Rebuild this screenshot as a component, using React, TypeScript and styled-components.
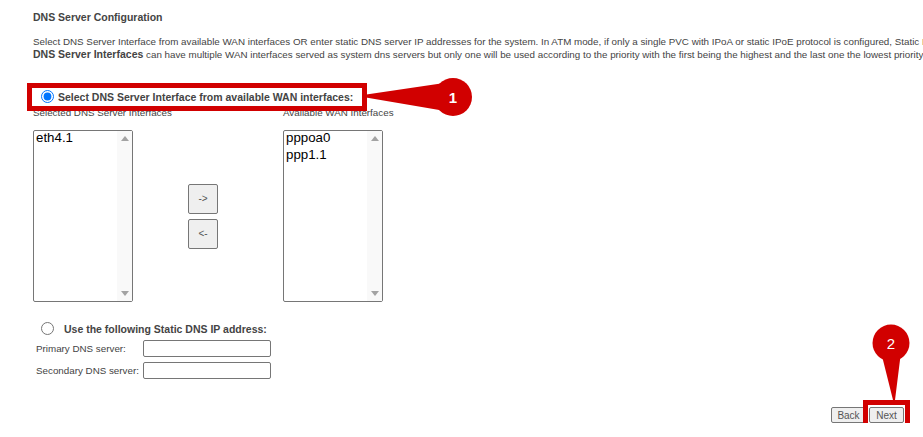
import React from "react";
import styled, {createGlobalStyle} from "styled-components";

const GlobalStyle = createGlobalStyle`
    body {
        margin: 0;
        overflow: hidden;
        background: #ffffff;
        font-family: "Liberation Sans", Arial, sans-serif;
    }
`;

const RED = "#d10000";
const TEXT = "#444444";

const Page = styled.div`
    width: 923px;
    box-sizing: border-box;
    padding: 11px 19px 0 33px;
    color: ${TEXT};
    font-size: 9.8px;
`;

const Title = styled.h1`
    margin: 0;
    font-size: 10.5px;
    line-height: 13px;
    font-weight: bold;
`;

const Description = styled.div`
    margin-top: 12px;
    line-height: 12px;
    white-space: nowrap;
`;

const Strong = styled.b`
    font-size: 10.5px;
`;

const RadioRow = styled.label`
    position: relative;
    display: flex;
    align-items: center;
    height: 16px;
    margin-top: ${({top}: {top: number}) => top}px;
    font-size: 10.5px;
    font-weight: bold;
`;

const Radio = styled.input`
    width: 13px;
    height: 13px;
    margin: 0 ${({gap}: {gap: number}) => gap}px 2px 8px;
`;

const Highlight = styled.span`
    position: absolute;
    box-sizing: border-box;
    border: 5px solid ${RED};
    pointer-events: none;
    z-index: 2;
`;

const Pin = styled.svg`
    position: absolute;
    overflow: visible;
    z-index: 3;
`;

const Interfaces = styled.div`
    display: grid;
    grid-template-columns: 155px 95px 100px;
    grid-template-rows: 12px 172px;
    row-gap: 11px;
    margin-top: 2px;
`;

const ListLabel = styled.div`
    line-height: 12px;
    white-space: nowrap;
`;

const ListBox = styled.div`
    display: flex;
    width: 100px;
    height: 172px;
    box-sizing: border-box;
    border: 1px solid #767676;
    border-radius: 2px;
    background: #ffffff;
`;

const Options = styled.div`
    flex: 1;
    margin-top: -2px;
    padding-left: 2px;
    color: #000000;
    font-size: 13.3px;
    line-height: 17px;
`;

const ScrollBar = styled.div`
    display: flex;
    flex-direction: column;
    justify-content: space-between;
    align-items: center;
    width: 15px;
    padding: 5px 0;
    box-sizing: border-box;
    background: #f9f9f9;
`;

const Arrow = styled.span`
    width: 0;
    height: 0;
    border-left: 4.5px solid transparent;
    border-right: 4.5px solid transparent;
    ${({down}: {down?: boolean}) => down
        ? `border-top: 5px solid #a3a3a3;`
        : `border-bottom: 5px solid #a3a3a3;`}
`;

const MoveButtons = styled.div`
    display: flex;
    flex-direction: column;
    gap: 5px;
    align-self: center;
`;

const Button = styled.button`
    box-sizing: border-box;
    width: ${({w}: {w: number, h: number}) => w}px;
    height: ${({h}: {w: number, h: number}) => h}px;
    padding: 0;
    border: 1px solid #767676;
    border-radius: 2px;
    background: #efefef;
    color: #555555;
    font-family: "Liberation Sans", Arial, sans-serif;
    font-size: 10px;
`;

const FieldRow = styled.div`
    display: flex;
    align-items: center;
    margin-top: ${({top}: {top: number}) => top}px;
`;

const FieldLabel = styled.span`
    width: 107px;
    padding-left: 3px;
    white-space: nowrap;
`;

const TextInput = styled.input`
    width: 128px;
    height: 17px;
    box-sizing: border-box;
    margin: 0;
    border: 1px solid #767676;
    border-radius: 2px;
`;

const Footer = styled.div`
    display: flex;
    justify-content: flex-end;
    gap: 3px;
    margin-top: 28px;
`;

const ButtonSlot = styled.div`
    position: relative;
`;

function ListColumn({items}: {items: string[]}) {
    return <ListBox>
        <Options>
            {items.map(item => <div key={item}>{item}</div>)}
        </Options>
        <ScrollBar>
            <Arrow />
            <Arrow down />
        </ScrollBar>
    </ListBox>
}

function PinNumber({x, y, label}: {x: number, y: number, label: string}) {
    return <text x={x} y={y} fill="#ffffff" fontSize="15" textAnchor="middle"
                 fontFamily="Liberation Sans, Arial, sans-serif">{label}</text>
}

function App() {
    return <Page>
        <GlobalStyle />
        <Title>DNS Server Configuration</Title>
        <Description>
            <div>Select DNS Server Interface from available WAN interfaces OR enter static DNS server IP addresses for the system. In ATM mode, if only a single PVC with IPoA or static IPoE protocol is configured, Static DNS server IP Addresses must be entered.</div>
            <div><Strong>DNS Server Interfaces</Strong> can have multiple WAN interfaces served as system dns servers but only one will be used according to the priority with the first being the highest and the last one the lowest priority if the WAN interface is connected.</div>
        </Description>

        <RadioRow top={28}>
            <Radio type="radio" name="dns" gap={4} defaultChecked />
            Select DNS Server Interface from available WAN interfaces:
            <Highlight style={{left: -6, top: -6, width: 340, height: 28}} />
            <Pin width={110} height={40} style={{left: 330, top: -12}}>
                <polygon points="0,18 88,5 88,35 0,20" fill={RED} />
                <circle cx={90} cy={20} r={19} fill={RED} />
                <PinNumber x={90} y={25.5} label="1" />
            </Pin>
        </RadioRow>

        <Interfaces>
            <ListLabel>Selected DNS Server Interfaces</ListLabel>
            <div />
            <ListLabel>Available WAN Interfaces</ListLabel>
            <ListColumn items={["eth4.1"]} />
            <MoveButtons>
                <Button w={30} h={30}>-&gt;</Button>
                <Button w={30} h={30}>&lt;-</Button>
            </MoveButtons>
            <ListColumn items={["pppoa0", "ppp1.1"]} />
        </Interfaces>

        <RadioRow top={19}>
            <Radio type="radio" name="dns" gap={10} />
            Use the following Static DNS IP address:
        </RadioRow>
        <FieldRow top={3}>
            <FieldLabel>Primary DNS server:</FieldLabel>
            <TextInput type="text" />
        </FieldRow>
        <FieldRow top={5}>
            <FieldLabel>Secondary DNS server:</FieldLabel>
            <TextInput type="text" />
        </FieldRow>

        <Footer>
            <Button w={35} h={16}>Back</Button>
            <ButtonSlot>
                <Button w={35} h={16}>Next</Button>
                <Highlight style={{left: -6, top: -7, right: -6, bottom: -5}} />
                <Pin width={40} height={78} style={{left: 3, top: -83}}>
                    <polygon points="9,28 29,28 23,76 21,76" fill={RED} />
                    <circle cx={19} cy={19} r={18.5} fill={RED} />
                    <PinNumber x={19} y={24.5} label="2" />
                </Pin>
            </ButtonSlot>
        </Footer>
    </Page>
}

export default App;
